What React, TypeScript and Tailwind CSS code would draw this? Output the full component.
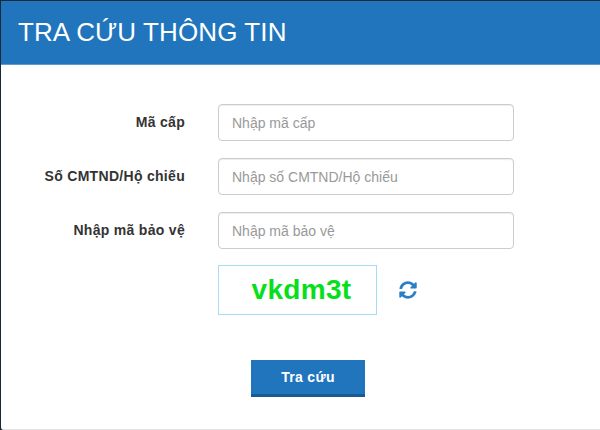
import React from 'react';
import { FaSyncAlt } from 'react-icons/fa';

const fields = [
  { label: 'Mã cấp', placeholder: 'Nhập mã cấp' },
  { label: 'Số CMTND/Hộ chiếu', placeholder: 'Nhập số CMTND/Hộ chiếu' },
  { label: 'Nhập mã bảo vệ', placeholder: 'Nhập mã bảo vệ' },
];

const App = () => {
  return (
    <div className="h-[430px] w-[600px] overflow-hidden bg-[#16293a] pl-px pt-px font-['Liberation_Sans',Arial,sans-serif]">
      <div className="flex h-[429px] flex-col rounded-tl-[2px] rounded-bl-[3px] border-b border-[#e5e5e5] bg-white">
        <div className="flex h-[64px] shrink-0 items-center border-b border-[#5b9bd0] bg-[#2075bd] pb-[1px] pl-[17px]">
          <h1 className="text-[26px] leading-none font-normal tracking-[0.1px] text-white">TRA CỨU THÔNG TIN</h1>
        </div>

        <div className="flex flex-col gap-[17px] pt-[39px]">
          {fields.map((field) => (
            <div key={field.label} className="flex items-center">
              <label className="w-[184px] text-right text-[14px] font-bold tracking-[0.3px] text-[#333333]">
                {field.label}
              </label>
              <input
                className="ml-[33px] h-[37px] w-[296px] rounded-[4px] border border-[#cccccc] bg-white px-[13px] text-[14px] text-[#555555] shadow-[inset_0_1px_1px_rgba(0,0,0,0.075)] outline-none placeholder:text-[#999999]"
                placeholder={field.placeholder}
              />
            </div>
          ))}
        </div>

        <div className="mt-[16px] ml-[217px] flex items-center">
          <div className="flex h-[50px] w-[159px] items-center justify-center border border-[#a6dcf6] bg-white pl-[8px] text-[28px] font-bold tracking-[0.3px] text-[#06e01a]">
            vkdm3t
          </div>
          <FaSyncAlt className="ml-[22px] text-[18px] text-[#2a7fc9]" />
        </div>

        <button className="mt-[45px] ml-[250px] h-[37px] w-[114px] border-b-[3px] border-[#175a96] bg-[#2075bd] pt-[1px] text-[14px] font-bold tracking-[0.3px] text-white">
          Tra cứu
        </button>
      </div>
    </div>
  );
};

export default App;
